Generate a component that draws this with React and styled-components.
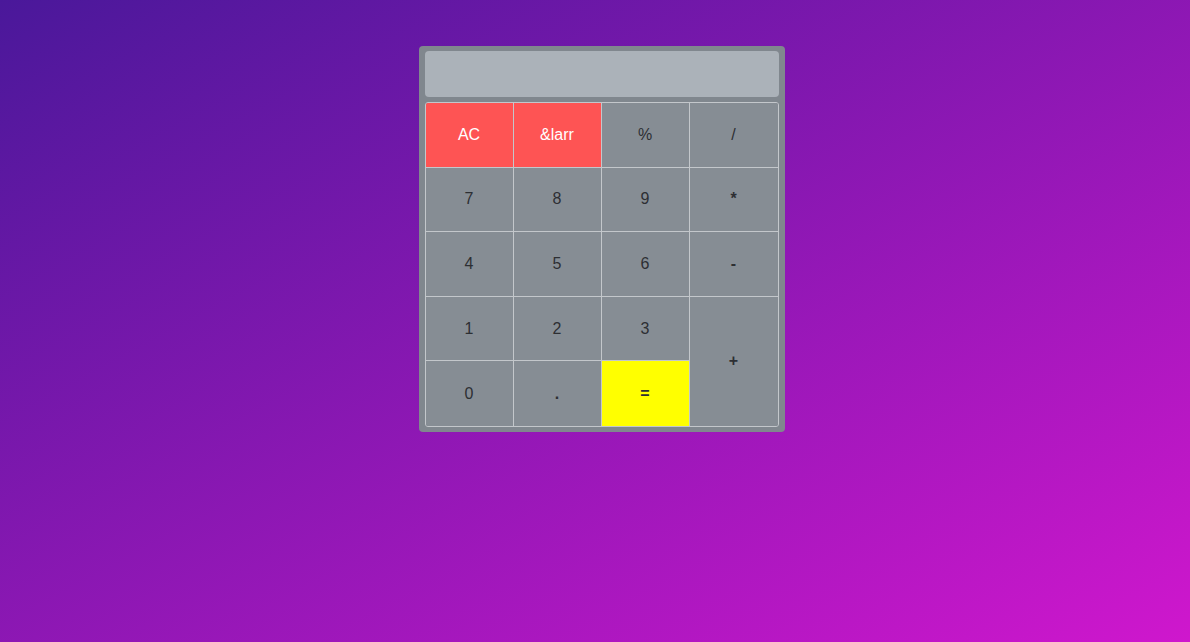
import React from "react";
import styled, { createGlobalStyle } from "styled-components";

const Global = createGlobalStyle`
  html, body { margin: 0; padding: 0; }
  body {
    width: 1190px;
    height: 642px;
    overflow: hidden;
    background: linear-gradient(to bottom right, #4a189a, #cf17cd);
    font-family: "Liberation Sans", Arial, sans-serif;
  }
`;

const Page = styled.div`
  display: flex;
  justify-content: center;
  align-items: flex-start;
  padding: 46px 0 0 13px;
  box-sizing: border-box;
  height: 642px;
`;

const Calculator = styled.div`
  width: 366px;
  box-sizing: border-box;
  background: #80878e;
  border-radius: 4px;
  padding: 5px 6px 5px 6px;
  display: flex;
  flex-direction: column;
  gap: 5px;
`;

const Display = styled.div`
  height: 46px;
  background: #abb2b9;
  border-radius: 4px;
`;

const Keys = styled.div`
  display: grid;
  grid-template-columns: repeat(4, 1fr);
  grid-template-rows: repeat(5, 1fr);
  height: 325px;
  box-sizing: border-box;
  border: 1px solid #c3c7cb;
  border-radius: 3px;
  overflow: hidden;
  background: #868d94;
`;

const Key = styled.div`
  display: flex;
  align-items: center;
  justify-content: center;
  font-size: 16px;
  font-weight: ${(p) => (p.$bold ? 700 : 400)};
  color: ${(p) => (p.$variant === "red" ? "#ffffff" : "#2d2f33")};
  background: ${(p) =>
    p.$variant === "red" ? "#fe5454" : p.$variant === "yellow" ? "#ffff00" : "#868d94"};
  border-right: ${(p) => (p.$last ? "none" : "1px solid #c3c7cb")};
  border-bottom: ${(p) => (p.$bottom ? "none" : "1px solid #c3c7cb")};
  grid-row: ${(p) => (p.$tall ? "span 2" : "auto")};
`;

const keys = [
  { t: "AC", v: "red" },
  { t: "&larr", v: "red" },
  { t: "%" },
  { t: "/", last: true },
  { t: "7" }, { t: "8" }, { t: "9" }, { t: "*", last: true, bold: true },
  { t: "4" }, { t: "5" }, { t: "6" }, { t: "-", last: true, bold: true },
  { t: "1" }, { t: "2" }, { t: "3" }, { t: "+", last: true, tall: true, bottom: true, bold: true },
  { t: "0", bottom: true }, { t: ".", bottom: true, bold: true }, { t: "=", v: "yellow", bottom: true, bold: true },
];

export default function App() {
  return (
    <>
      <Global />
      <Page>
        <Calculator>
          <Display />
          <Keys>
            {keys.map((k, i) => (
              <Key key={i} $variant={k.v} $last={k.last} $bottom={k.bottom} $tall={k.tall} $bold={k.bold}>
                {k.t}
              </Key>
            ))}
          </Keys>
        </Calculator>
      </Page>
    </>
  );
}
